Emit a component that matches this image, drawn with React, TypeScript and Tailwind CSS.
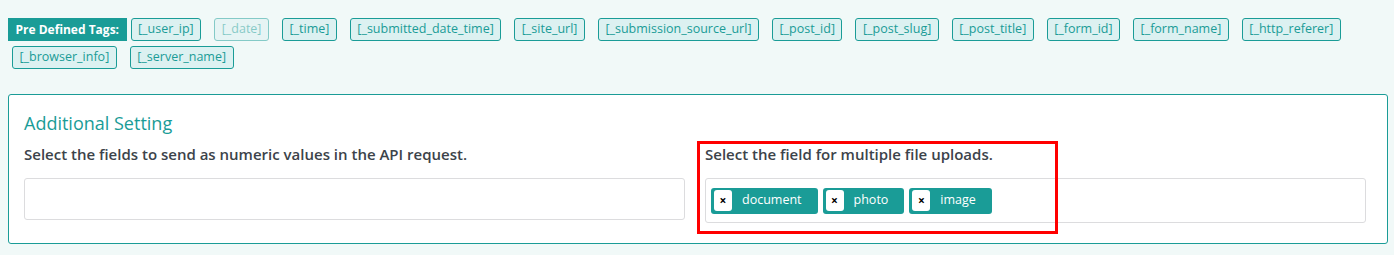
import React from "react";

const tags = [
  "[_user_ip]",
  "[_date]",
  "[_time]",
  "[_submitted_date_time]",
  "[_site_url]",
  "[_submission_source_url]",
  "[_post_id]",
  "[_post_slug]",
  "[_post_title]",
  "[_form_id]",
  "[_form_name]",
  "[_http_referer]",
  "[_browser_info]",
  "[_server_name]",
];

const chips = ["document", "photo", "image"];

export default function App() {
  return (
    <div className="relative min-h-[255px] w-[1394px] bg-[#f1f9f8] font-['Open_Sans',sans-serif] overflow-hidden">
      <div className="flex flex-wrap gap-y-[5px] pl-2 pr-4 pt-[18px]">
        <span className="flex h-[23px] items-center bg-[#1a9c97] px-[7.5px] text-[12px] font-bold text-white">
          Pre Defined Tags:
        </span>
        {tags.map((t) => (
          <span
            key={t}
            className={
              "ml-1 mr-[9px] flex h-[23px] items-center rounded-[3px] border border-[#1a9c97] bg-[#dcf1f1] px-[6.5px] text-[12.5px] text-[#1a9c97] " +
              (t === "[_date]" ? "opacity-50" : "")
            }
          >
            {t}
          </span>
        ))}
      </div>

      <div className="mb-3 ml-2 mr-[6px] mt-[25px] rounded-[3px] border border-[#1a9c97] bg-white pb-[20px] pl-[15px] pr-[21px] pt-[16px]">
        <h3 className="text-[18px] font-medium leading-[24px] text-[#1a9c97]">Additional Setting</h3>
        <div className="mt-[9px] grid grid-cols-2 gap-x-[20px]">
          <div>
            <div className="text-[15px] font-semibold leading-[21px] text-[#3c434a]">
              Select the fields to send as numeric values in the API request.
            </div>
            <div className="mt-[13px] h-[42px] rounded-[3px] border border-[#dcdcde] bg-white" />
          </div>
          <div>
            <div className="text-[15px] font-semibold leading-[21px] text-[#3c434a]">
              Select the field for multiple file uploads.
            </div>
            <div className="mt-[13px] flex min-h-[45px] items-center gap-[5px] rounded-[3px] border border-[#dcdcde] bg-white px-[5px]">
              {chips.map((c) => (
                <span
                  key={c}
                  className="flex h-[26px] items-center rounded-[3px] bg-[#1a9c97] pl-[3px] pr-[16px] text-[12.5px] text-white"
                >
                  <span className="mr-[10px] flex h-[21px] w-[18px] items-center justify-center rounded-[3px] bg-white text-[12px] font-bold leading-none text-black">
                    ×
                  </span>
                  {c}
                </span>
              ))}
            </div>
          </div>
        </div>
      </div>

      <div className="pointer-events-none absolute left-[697px] top-[141px] h-[93px] w-[361px] border-[3px] border-[#ff0000]" />
    </div>
  );
}
